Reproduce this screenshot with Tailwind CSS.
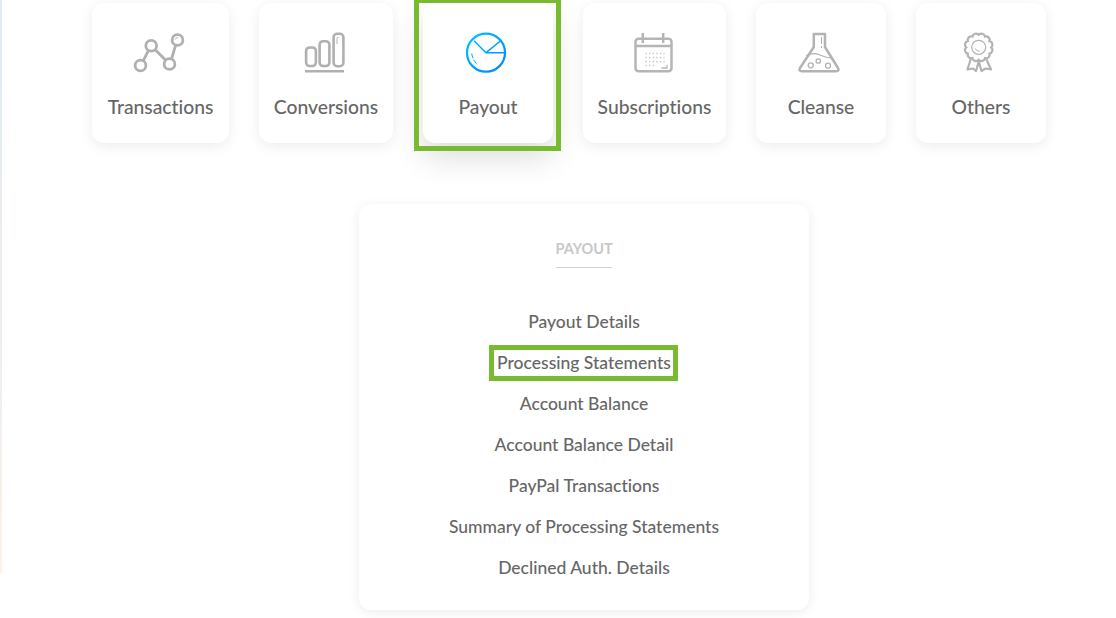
<!DOCTYPE html>
<html>
<head>
<meta charset="utf-8">
<script src="https://cdn.jsdelivr.net/npm/@tailwindcss/browser@4"></script>
</head>
<body class="bg-white overflow-hidden font-['Lato','Noto_Sans',sans-serif] [font-variant-ligatures:none]">
<div class="relative w-[1116px] h-[618px] overflow-hidden pt-[3px]">
  <div class="absolute left-0 top-0 w-[2px] h-[573px] bg-gradient-to-b from-[#dfecf4] via-[#ebeeee] to-[#fdf1e8]"></div>

  <div class="flex gap-[30px] ml-[92px] text-[19.3px] leading-[24px] text-[#666] font-medium">
    <div class="w-[137px] h-[140px] bg-white rounded-[12px] shadow-[0_3px_14px_rgba(0,0,0,0.08)] flex flex-col items-center pt-[27px]">
      <svg class="w-[60px] h-[45px]" viewBox="130.5 30 60 45" fill="none" stroke="#b0b0b0" stroke-width="2.800">
        <circle cx="140" cy="65.5" r="5.4"/><circle cx="150.7" cy="45.7" r="5.4"/><circle cx="169" cy="64" r="5.4"/><circle cx="177" cy="40" r="5.4"/>
        <path d="M142.7 60.8 148 50.4M154.5 49.5 165.2 60.2M171 59 175.2 45.2"/>
        <path d="M174.5 39.5q1-2 3-2" stroke-width="1"/>
      </svg>
      <span class="mt-[20px]">Transactions</span>
    </div>
    <div class="w-[134px] h-[140px] bg-white rounded-[12px] shadow-[0_3px_14px_rgba(0,0,0,0.08)] flex flex-col items-center pt-[27px]">
      <svg class="w-[60px] h-[45px]" viewBox="296 30 60 45" fill="none" stroke="#b0b0b0" stroke-width="2.600">
        <rect x="306.1" y="47.5" width="9.8" height="18.5" rx="3.5"/><rect x="319.6" y="41.2" width="9.8" height="24.8" rx="3.5"/><rect x="333.6" y="33.8" width="9.8" height="32.4" rx="3.5"/>
        <path d="M305 71.2H344"/><path d="M337 44V38.5q0-1.200 1.500-1.200" stroke-width="1"/>
      </svg>
      <span class="mt-[20px]">Conversions</span>
    </div>
    <div class="relative w-[130px] h-[140px] bg-white rounded-[12px] shadow-[0_14px_32px_rgba(0,0,0,0.14)] flex flex-col items-center pt-[27px]">
      <svg class="w-[60px] h-[45px]" viewBox="458 30 60 45" fill="none" stroke="url(#pay)" stroke-width="2.200">
        <defs><linearGradient id="pay" gradientUnits="userSpaceOnUse" x1="470" y1="35" x2="505" y2="72"><stop offset="0" stop-color="#00c0ff"/><stop offset="1" stop-color="#0084ff"/></linearGradient></defs>
        <circle cx="486" cy="52.700" r="19"/>
        <path d="M474 40.700 486 52.700 501.700 40M486 52.700H505" stroke-width="1.500"/>
        <path d="M471.700 53.500Q472.800 60.500 478 65" stroke-width="1" stroke-dasharray="5 1.500"/>
      </svg>
      <span class="mt-[20px]">Payout</span>
      <div class="absolute -left-[9px] -right-[8px] -top-[5px] -bottom-[8px] border-[5px] border-[#78bb31]"></div>
    </div>
    <div class="w-[143px] h-[140px] bg-white rounded-[12px] shadow-[0_3px_14px_rgba(0,0,0,0.08)] flex flex-col items-center pt-[27px]">
      <svg class="w-[60px] h-[45px]" viewBox="624.500 30 60 45" fill="none" stroke="#b5b5b5" stroke-width="2.500">
        <rect x="635" y="38.800" width="36" height="32.400" rx="3"/>
        <path d="M635 46H671M642.300 33V43M662.700 33V43"/>
        <path d="M645 53.500H664M645 57.500H664M645 61.500H664" stroke-width="1.300" stroke-dasharray="1.300 2.300" stroke="#c4c4c4"/>
        <path d="M645 65.500H656" stroke-width="1.300" stroke-dasharray="1.300 2.300" stroke="#c4c4c4"/>
        <path d="M661 68H666.500V65" stroke-width="1.300"/>
      </svg>
      <span class="mt-[20px]">Subscriptions</span>
    </div>
    <div class="w-[130px] h-[140px] bg-white rounded-[12px] shadow-[0_3px_14px_rgba(0,0,0,0.08)] flex flex-col items-center pt-[27px]">
      <svg class="w-[60px] h-[45px]" viewBox="791 30 60 45" fill="none" stroke="#b3b3b3" stroke-width="2.500">
        <path d="M813.800 34H825V47L838 68Q839.500 71.200 836 71.200H802Q798.500 71.200 800 68L813.800 47Z" stroke-linejoin="round"/>
        <path d="M806 56Q813 52 820 55T832 58" stroke-width="1.300"/>
        <circle cx="810.700" cy="65.300" r="2.500" stroke-width="1.300"/><circle cx="818.300" cy="61" r="2.200" stroke-width="1.300"/><circle cx="828" cy="65.700" r="2.500" stroke-width="1.300"/>
        <path d="M821.500 37V48" stroke-width="1" stroke-dasharray="7 2"/>
      </svg>
      <span class="mt-[20px]">Cleanse</span>
    </div>
    <div class="w-[130px] h-[140px] bg-white rounded-[12px] shadow-[0_3px_14px_rgba(0,0,0,0.08)] flex flex-col items-center pt-[27px]">
      <svg class="w-[60px] h-[45px]" viewBox="951 30 60 45" fill="none" stroke="#b3b3b3" stroke-width="2.200">
        <g transform="translate(978.700 47.300)">
          <path d="M12.500 0A3.600 3.600 0 0 1 10.800 6.250A3.600 3.600 0 0 1 6.250 10.800A3.600 3.600 0 0 1 0 12.500A3.600 3.600 0 0 1 -6.250 10.800A3.600 3.600 0 0 1 -10.800 6.250A3.600 3.600 0 0 1 -12.500 0A3.600 3.600 0 0 1 -10.800 -6.250A3.600 3.600 0 0 1 -6.250 -10.800A3.600 3.600 0 0 1 0 -12.500A3.600 3.600 0 0 1 6.250 -10.800A3.600 3.600 0 0 1 10.800 -6.250A3.600 3.600 0 0 1 12.500 0Z"/>
          <circle r="7" stroke-width="1.300"/>
          <path d="M-3.500 1Q-2.500 4 1 4" stroke-width="1"/>
        </g>
        <path d="M971 58 967.500 69.500 973 68.500 976 71 979 60.500M986 58.500 991 69.500 985.500 68.500 981.500 71 978.500 60.500" stroke-linejoin="round"/>
      </svg>
      <span class="mt-[20px]">Others</span>
    </div>
  </div>

  <div class="w-[450px] h-[406px] ml-[359px] mt-[61px] bg-white rounded-[12px] shadow-[0_2px_12px_rgba(0,0,0,0.08)] flex flex-col items-center pt-[33px] text-[17.5px] leading-[41px] text-[#666] font-medium">
    <div class="w-[56px] h-[31px] border-b border-[#d2d2d2] text-[#c8c8c8] text-[14.5px] leading-[24px] font-bold text-center whitespace-nowrap flex justify-center">PAYOUT</div>
    <ul class="flex flex-col items-center mt-[33px]">
      <li>Payout Details</li>
      <li class="relative">Processing Statements<span class="absolute -left-[8px] -right-[7px] top-[3px] bottom-[2px] border-[5px] border-[#78bb31]"></span></li>
      <li>Account Balance</li>
      <li>Account Balance Detail</li>
      <li>PayPal Transactions</li>
      <li>Summary of Processing Statements</li>
      <li>Declined Auth. Details</li>
    </ul>
  </div>
</div>
</body>
</html>
